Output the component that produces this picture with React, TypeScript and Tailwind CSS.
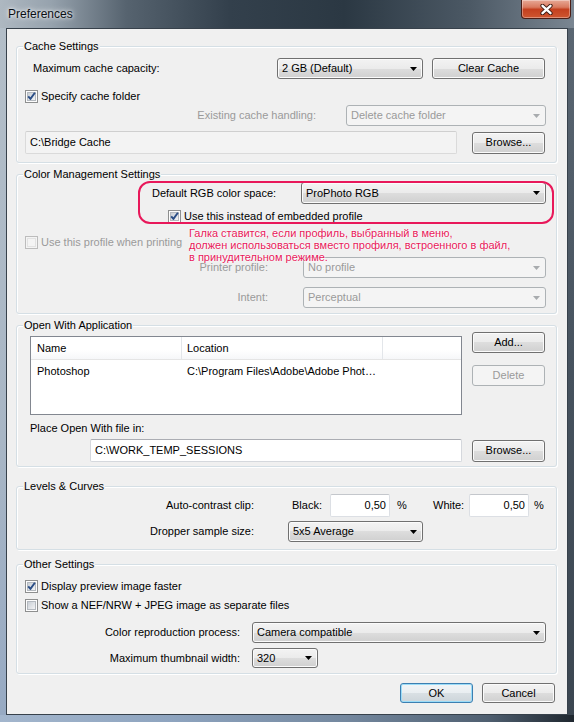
import React from "react";

const normalBtn =
  "border-[#707070] bg-[linear-gradient(to_bottom,#f3f3f3_0%,#ebebeb_50%,#dddddd_50%,#d0d0d0_100%)] shadow-[inset_0_0_0_1px_#fbfbfb] text-black";
const disabledBtn = "border-[#adb2b5] bg-[#f4f4f4] text-[#9a9a9a]";
const defaultBtn =
  "border-[#3c7fb1] bg-[linear-gradient(to_bottom,#f1f5f7_0%,#e9eef1_50%,#d9e0e4_50%,#cdd5da_100%)] shadow-[inset_0_0_0_1px_#9bdcf8] text-black";

function Button({
  className,
  children,
  kind = "normal",
}: {
  className: string;
  children: React.ReactNode;
  kind?: "normal" | "disabled" | "default";
}) {
  const k = kind === "disabled" ? disabledBtn : kind === "default" ? defaultBtn : normalBtn;
  return (
    <div className={`flex shrink-0 items-center justify-center rounded-[3px] border text-[11px] leading-none ${k} ${className}`}>
      {children}
    </div>
  );
}

function Arrow({ disabled }: { disabled?: boolean }) {
  return (
    <svg width="7" height="4" viewBox="0 0 7 4" className="shrink-0">
      <polygon points="0,0 7,0 3.5,4" fill={disabled ? "#a8abae" : "#000"} />
    </svg>
  );
}

function Combo({ className, text, disabled }: { className: string; text: string; disabled?: boolean }) {
  return (
    <div
      className={`flex shrink-0 items-center justify-between rounded-[3px] border pl-[4px] pr-[5px] text-[11px] leading-none ${
        disabled ? disabledBtn : normalBtn
      } ${className}`}
    >
      <span className="whitespace-nowrap">{text}</span>
      <Arrow disabled={disabled} />
    </div>
  );
}

function CheckBox({ checked = false, disabled = false }: { checked?: boolean; disabled?: boolean }) {
  return (
    <svg width="13" height="13" viewBox="0 0 13 13" className="shrink-0">
      <defs>
        <linearGradient id="cbg" x1="0" y1="0" x2="1" y2="1">
          <stop offset="0" stopColor="#c6ccd3" />
          <stop offset="1" stopColor="#f6f6f7" />
        </linearGradient>
      </defs>
      <rect x="0.5" y="0.5" width="12" height="12" fill={disabled ? "#f4f4f4" : "#fdfdfd"} stroke={disabled ? "#bcbcbc" : "#8e8f8f"} />
      <rect
        x="2.5"
        y="2.5"
        width="8"
        height="8"
        fill={disabled ? "#f4f4f4" : "url(#cbg)"}
        stroke={disabled ? "#e2e2e2" : "#b4b9bf"}
      />
      {checked && (
        <path d="M3.2 6.3 L5.4 8.9 L9.9 2.8" fill="none" stroke="#2a4d86" strokeWidth="1.9" strokeLinejoin="round" />
      )}
    </svg>
  );
}

function Legend({ children }: { children: React.ReactNode }) {
  return (
    <div className="-mb-[6px] -ml-[2px] -mt-[7px] w-fit bg-[#f0f0f0] px-[1px] text-[11px] leading-[13px] text-black">
      {children}
    </div>
  );
}

const groupCls =
  "relative rounded-[3px] border border-[#d5dfe5] shadow-[inset_1px_1px_0_#ffffff,1px_1px_0_#ffffff] pl-[8px] pr-[10px]";

export default function App() {
  return (
    <div className="flex h-[722px] w-[574px] flex-col overflow-hidden bg-[#4a5865] font-['Liberation_Sans',Arial,sans-serif] text-[11px] text-black">
      {/* Title bar */}
      <div className="flex h-[28px] shrink-0 items-start justify-between bg-[linear-gradient(to_right,#aeb8c1_0%,#96a2ad_9%,#56636f_22%,#33404c_40%,#2b3843_60%,#4c5965_82%,#7a8692_100%)]">
        <div className="ml-[8px] mt-[7px] text-[12px] leading-[14px] text-[#0b0f14] [text-shadow:0_0_6px_rgba(255,255,255,0.95),0_0_3px_rgba(255,255,255,0.9)]">
          Preferences
        </div>
        <div className="mr-[3px] flex h-[19px] w-[50px] items-center justify-center rounded-b-[4px] border border-t-0 border-[#4b1e16] bg-[linear-gradient(to_bottom,#e7a996_0%,#d97a5f_40%,#c4401f_52%,#cf5630_100%)] shadow-[inset_0_0_0_1px_rgba(255,255,255,0.35)]">
          <svg width="13" height="11" viewBox="0 0 13 11">
            <path d="M2.5 1.8 L10.5 9.2 M10.5 1.8 L2.5 9.2" stroke="#3b1a12" strokeWidth="4.2" strokeLinecap="round" />
            <path d="M2.5 1.8 L10.5 9.2 M10.5 1.8 L2.5 9.2" stroke="#ffffff" strokeWidth="2.4" strokeLinecap="round" />
          </svg>
        </div>
      </div>

      <div className="flex flex-1">
        {/* left frame */}
        <div className="w-[6px] shrink-0 bg-[linear-gradient(to_bottom,#b3bec8_0%,#a8b6c5_60%,#97aac3_100%)]" />
        {/* client */}
        <div className="flex w-[562px] shrink-0 flex-col border border-[#37414b] bg-[#f0f0f0] pl-[9px] pr-[10px]">
          {/* Cache Settings */}
          <div className={`mt-[17px] pb-[8px] ${groupCls}`}>
            <Legend>Cache Settings</Legend>
            <div className="mt-[11px] flex h-[21px] items-center">
              <div className="w-[252px] shrink-0 pl-[8px]">Maximum cache capacity:</div>
              <Combo className="h-[21px] w-[146px]" text="2 GB (Default)" />
              <Button className="ml-[9px] h-[21px] w-[113px]">Clear Cache</Button>
            </div>
            <div className="mt-[11px] flex h-[13px] items-center gap-[3px]">
              <CheckBox checked />
              <span>Specify cache folder</span>
            </div>
            <div className="mt-[2px] flex h-[21px] items-center justify-end">
              <span className="text-[#9a9a9a]">Existing cache handling:</span>
              <Combo className="ml-[30px] h-[21px] w-[200px]" text="Delete cache folder" disabled />
            </div>
            <div className="mt-[5px] flex h-[23px] items-center justify-between">
              <div className="flex h-[23px] w-[432px] items-center rounded-[2px] border border-[#dadada] border-t-[#cfcfcf] bg-[#f3f3f3] pl-[4px]">
                C:\Bridge Cache
              </div>
              <Button className="mr-[1px] h-[22px] w-[73px]">Browse...</Button>
            </div>
          </div>

          {/* Color Management Settings */}
          <div className={`mt-[11px] pb-[5px] ${groupCls}`}>
            <Legend>Color Management Settings</Legend>
            <div className="mt-[7px] flex h-[22px] items-center">
              <span className="ml-[127px] whitespace-nowrap">Default RGB color space:</span>
              <Combo className="ml-auto h-[22px] w-[245px]" text="ProPhoto RGB" />
            </div>
            <div className="mt-[6px] flex h-[13px] items-center gap-[3px] pl-[143px]">
              <CheckBox checked />
              <span className="whitespace-nowrap">Use this instead of embedded profile</span>
            </div>
            <div className="mt-[13px] flex h-[13px] items-center gap-[3px]">
              <CheckBox disabled />
              <span className="text-[#9a9a9a]">Use this profile when printing</span>
            </div>
            <div className="mt-[8px] flex h-[21px] items-center">
              <span className="w-[243px] shrink-0 text-right text-[#9a9a9a]">Printer profile:</span>
              <Combo className="ml-auto h-[21px] w-[243px]" text="No profile" disabled />
            </div>
            <div className="mt-[9px] flex h-[21px] items-center">
              <span className="w-[243px] shrink-0 text-right text-[#9a9a9a]">Intent:</span>
              <Combo className="ml-auto h-[21px] w-[243px]" text="Perceptual" disabled />
            </div>

            {/* annotation overlay */}
            <div className="pointer-events-none absolute left-[121px] top-[6px] h-[43px] w-[416px] rounded-[12px] border-2 border-[#e8185a]" />
            <div className="pointer-events-none absolute left-[172px] top-[52px] whitespace-nowrap text-[11px] leading-[12px] text-[#e8185a] [text-shadow:0_0_2px_#ffffff,0_0_2px_#ffffff]">
              <div>Галка ставится, если профиль, выбранный в меню,</div>
              <div>должен использоваться вместо профиля, встроенного в файл,</div>
              <div>в принудительном режиме.</div>
            </div>
          </div>

          {/* Open With Application */}
          <div className={`mt-[11px] pb-[4px] ${groupCls}`}>
            <Legend>Open With Application</Legend>
            <div className="mt-[6px] flex items-start">
              <div className="ml-[5px] mt-[4px] flex h-[79px] w-[432px] shrink-0 flex-col border border-[#828790] bg-white">
                <div className="flex h-[23px] shrink-0 border-b border-[#e5e5e5] bg-[linear-gradient(to_bottom,#ffffff_0%,#ffffff_60%,#f6f7f9_100%)]">
                  <div className="flex w-[151px] items-center border-r border-[#e3e6ea] pl-[6px]">Name</div>
                  <div className="flex w-[201px] items-center border-r border-[#e3e6ea] pl-[5px]">Location</div>
                  <div className="flex-1" />
                </div>
                <div className="flex h-[22px] items-center">
                  <div className="w-[151px] pl-[6px]">Photoshop</div>
                  <div className="pl-[5px] whitespace-nowrap">C:\Program Files\Adobe\Adobe Phot…</div>
                </div>
              </div>
              <div className="ml-auto mr-[1px] flex flex-col gap-[12px]">
                <Button className="h-[21px] w-[73px]">Add...</Button>
                <Button className="h-[21px] w-[73px]" kind="disabled">
                  Delete
                </Button>
              </div>
            </div>
            <div className="ml-[5px] mt-[7px] h-[13px] leading-[13px]">Place Open With file in:</div>
            <div className="mt-[4px] flex h-[23px] items-center">
              <div className="ml-[65px] flex h-[23px] w-[372px] items-center rounded-[2px] border border-[#d5d8dd] border-t-[#abadb3] bg-white pl-[4px]">
                C:\WORK_TEMP_SESSIONS
              </div>
              <Button className="ml-auto mr-[1px] h-[22px] w-[73px]">Browse...</Button>
            </div>
          </div>

          {/* Levels & Curves */}
          <div className={`mt-[19px] pb-[7px] ${groupCls}`}>
            <Legend>Levels &amp; Curves</Legend>
            <div className="mt-[7px] flex h-[23px] items-center">
              <span className="w-[229px] shrink-0 text-right">Auto-contrast clip:</span>
              <span className="ml-[38px] w-[38px] shrink-0">Black:</span>
              <div className="flex h-[23px] w-[60px] shrink-0 items-center justify-end rounded-[2px] border border-[#dcdfe4] border-t-[#c4c7cc] bg-white pr-[3px]">
                0,50
              </div>
              <span className="ml-[7px] w-[36px] shrink-0">%</span>
              <span className="w-[36px] shrink-0">White:</span>
              <div className="flex h-[23px] w-[60px] shrink-0 items-center justify-end rounded-[2px] border border-[#dcdfe4] border-t-[#c4c7cc] bg-white pr-[3px]">
                0,50
              </div>
              <span className="ml-[5px]">%</span>
            </div>
            <div className="mt-[4px] flex h-[21px] items-center">
              <span className="w-[229px] shrink-0 text-right">Dropper sample size:</span>
              <Combo className="ml-[34px] h-[21px] w-[135px]" text="5x5 Average" />
            </div>
          </div>

          {/* Other Settings */}
          <div className={`mt-[14px] pb-[5px] ${groupCls}`}>
            <Legend>Other Settings</Legend>
            <div className="mt-[15px] flex h-[13px] items-center gap-[3px]">
              <CheckBox checked />
              <span>Display preview image faster</span>
            </div>
            <div className="mt-[6px] flex h-[13px] items-center gap-[3px]">
              <CheckBox />
              <span>Show a NEF/NRW + JPEG image as separate files</span>
            </div>
            <div className="mt-[10px] flex h-[21px] items-center">
              <span className="w-[215px] shrink-0 text-right">Color reproduction process:</span>
              <Combo className="ml-[12px] h-[21px] w-[294px]" text="Camera compatible" />
            </div>
            <div className="mt-[5px] flex h-[20px] items-center">
              <span className="w-[215px] shrink-0 text-right">Maximum thumbnail width:</span>
              <Combo className="ml-[12px] h-[20px] w-[66px]" text="320" />
            </div>
          </div>

          {/* dialog buttons */}
          <div className="mt-[9px] flex justify-end gap-[9px] pr-[2px]">
            <Button className="h-[20px] w-[73px]" kind="default">
              OK
            </Button>
            <Button className="h-[20px] w-[73px]">Cancel</Button>
          </div>
          <div className="flex-1" />
        </div>
        {/* right frame */}
        <div className="w-[6px] shrink-0 bg-[linear-gradient(to_bottom,#5a6672_0%,#46525e_50%,#3b4651_100%)]" />
      </div>
      {/* bottom frame */}
      <div className="h-[7px] shrink-0 bg-[linear-gradient(to_right,#a3b6cd_0%,#8ea4bf_30%,#74889f_60%,#4f5f70_85%,#1f272f_100%)]" />
    </div>
  );
}
